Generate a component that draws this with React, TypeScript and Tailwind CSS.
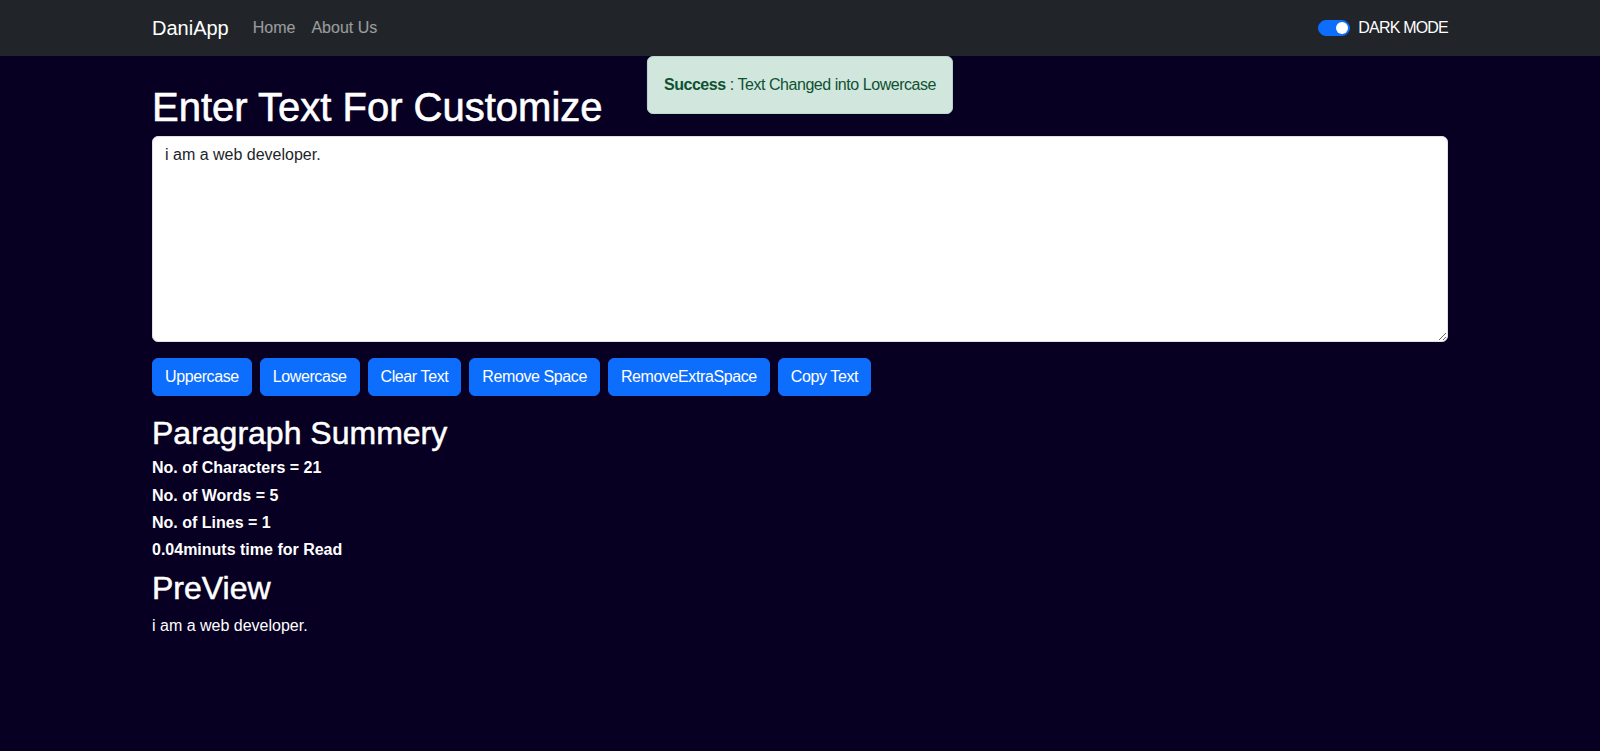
import React, { useState } from 'react';

const buttons = ['Uppercase', 'Lowercase', 'Clear Text', 'Remove Space', 'RemoveExtraSpace', 'Copy Text'];

function App() {
  const [text, setText] = useState('i am a web developer.');
  const [dark, setDark] = useState(true);

  const words = text.split(/\s+/).filter((w) => w.length !== 0).length;
  const lines = text.split('\n').length;

  return (
    <div className="min-h-screen bg-[#070023] text-white font-['Liberation_Sans',Arial,sans-serif]">
      <nav className="relative bg-[#212529] py-2">
        <div className="max-w-[1320px] mx-auto px-3 flex items-center justify-between">
          <div className="flex items-center">
            <a href="#" className="text-xl leading-[30px] py-[5px] mr-4 text-white">DaniApp</a>
            <ul className="flex">
              <li><a href="#" className="block px-2 py-2 leading-6 text-white/55">Home</a></li>
              <li><a href="#" className="block px-2 py-2 leading-6 text-white/55">About Us</a></li>
            </ul>
          </div>
          <label className="flex items-center gap-2 cursor-pointer">
            <button
              type="button"
              onClick={() => setDark(!dark)}
              className={dark
                ? 'w-8 h-4 rounded-full bg-[#0d6efd] border border-[#0d6efd] flex items-center justify-end px-[1px]'
                : 'w-8 h-4 rounded-full bg-white border border-gray-400 flex items-center justify-start px-[1px]'}
            >
              <span className={dark ? 'w-3 h-3 rounded-full bg-white' : 'w-3 h-3 rounded-full bg-gray-400'}></span>
            </button>
            <span className="text-base leading-6 text-white tracking-[-0.8px]">DARK MODE</span>
          </label>
        </div>
        <div className="absolute top-full left-1/2 -translate-x-1/2 z-10 bg-[#d1e7dd] border border-[#badbcc] text-[#0f5132] rounded-md p-4 leading-6 whitespace-nowrap tracking-[-0.45px]">
          <strong>Success</strong> : Text Changed into Lowercase
        </div>
      </nav>

      <div className="max-w-[1320px] mx-auto px-3">
        <h1 className="mt-6 pt-[3px] mb-[5px] text-[40px] leading-[48px] font-medium [-webkit-text-stroke:0.6px]">Enter Text For Customize</h1>
        <textarea
          rows={8}
          value={text}
          onChange={(e) => setText(e.target.value)}
          className="block w-full h-[206px] bg-white text-[#212529] border border-[#dee2e6] rounded-md px-3 py-1.5 text-base leading-6 mb-4 outline-none"
        />
        <div className="flex gap-2">
          {buttons.map((b) => (
            <button
              key={b}
              type="button"
              className="bg-[#0d6efd] border border-[#0d6efd] text-white rounded-md px-3 py-1.5 text-base leading-6 tracking-[-0.4px]"
            >
              {b}
            </button>
          ))}
        </div>

        <div className="mt-4">
          <h2 className="pt-[2px] mb-[6px] text-[32px] leading-[38.4px] font-medium [-webkit-text-stroke:0.5px]">Paragraph Summery</h2>
          <h6 className="text-base leading-[19.2px] font-bold mb-2">No. of Characters = {text.length}</h6>
          <h6 className="text-base leading-[19.2px] font-bold mb-2">No. of Words = {words}</h6>
          <h6 className="text-base leading-[19.2px] font-bold mb-2">No. of Lines = {lines}</h6>
          <h6 className="text-base leading-[19.2px] font-bold mb-2">{(0.008 * words).toFixed(2)}minuts time for Read</h6>
          <h2 className="pt-[2px] mb-[6px] text-[32px] leading-[38.4px] font-medium [-webkit-text-stroke:0.5px]">PreView</h2>
          <p className="text-base leading-6">{text}</p>
        </div>
      </div>
    </div>
  );
}

export default App;
